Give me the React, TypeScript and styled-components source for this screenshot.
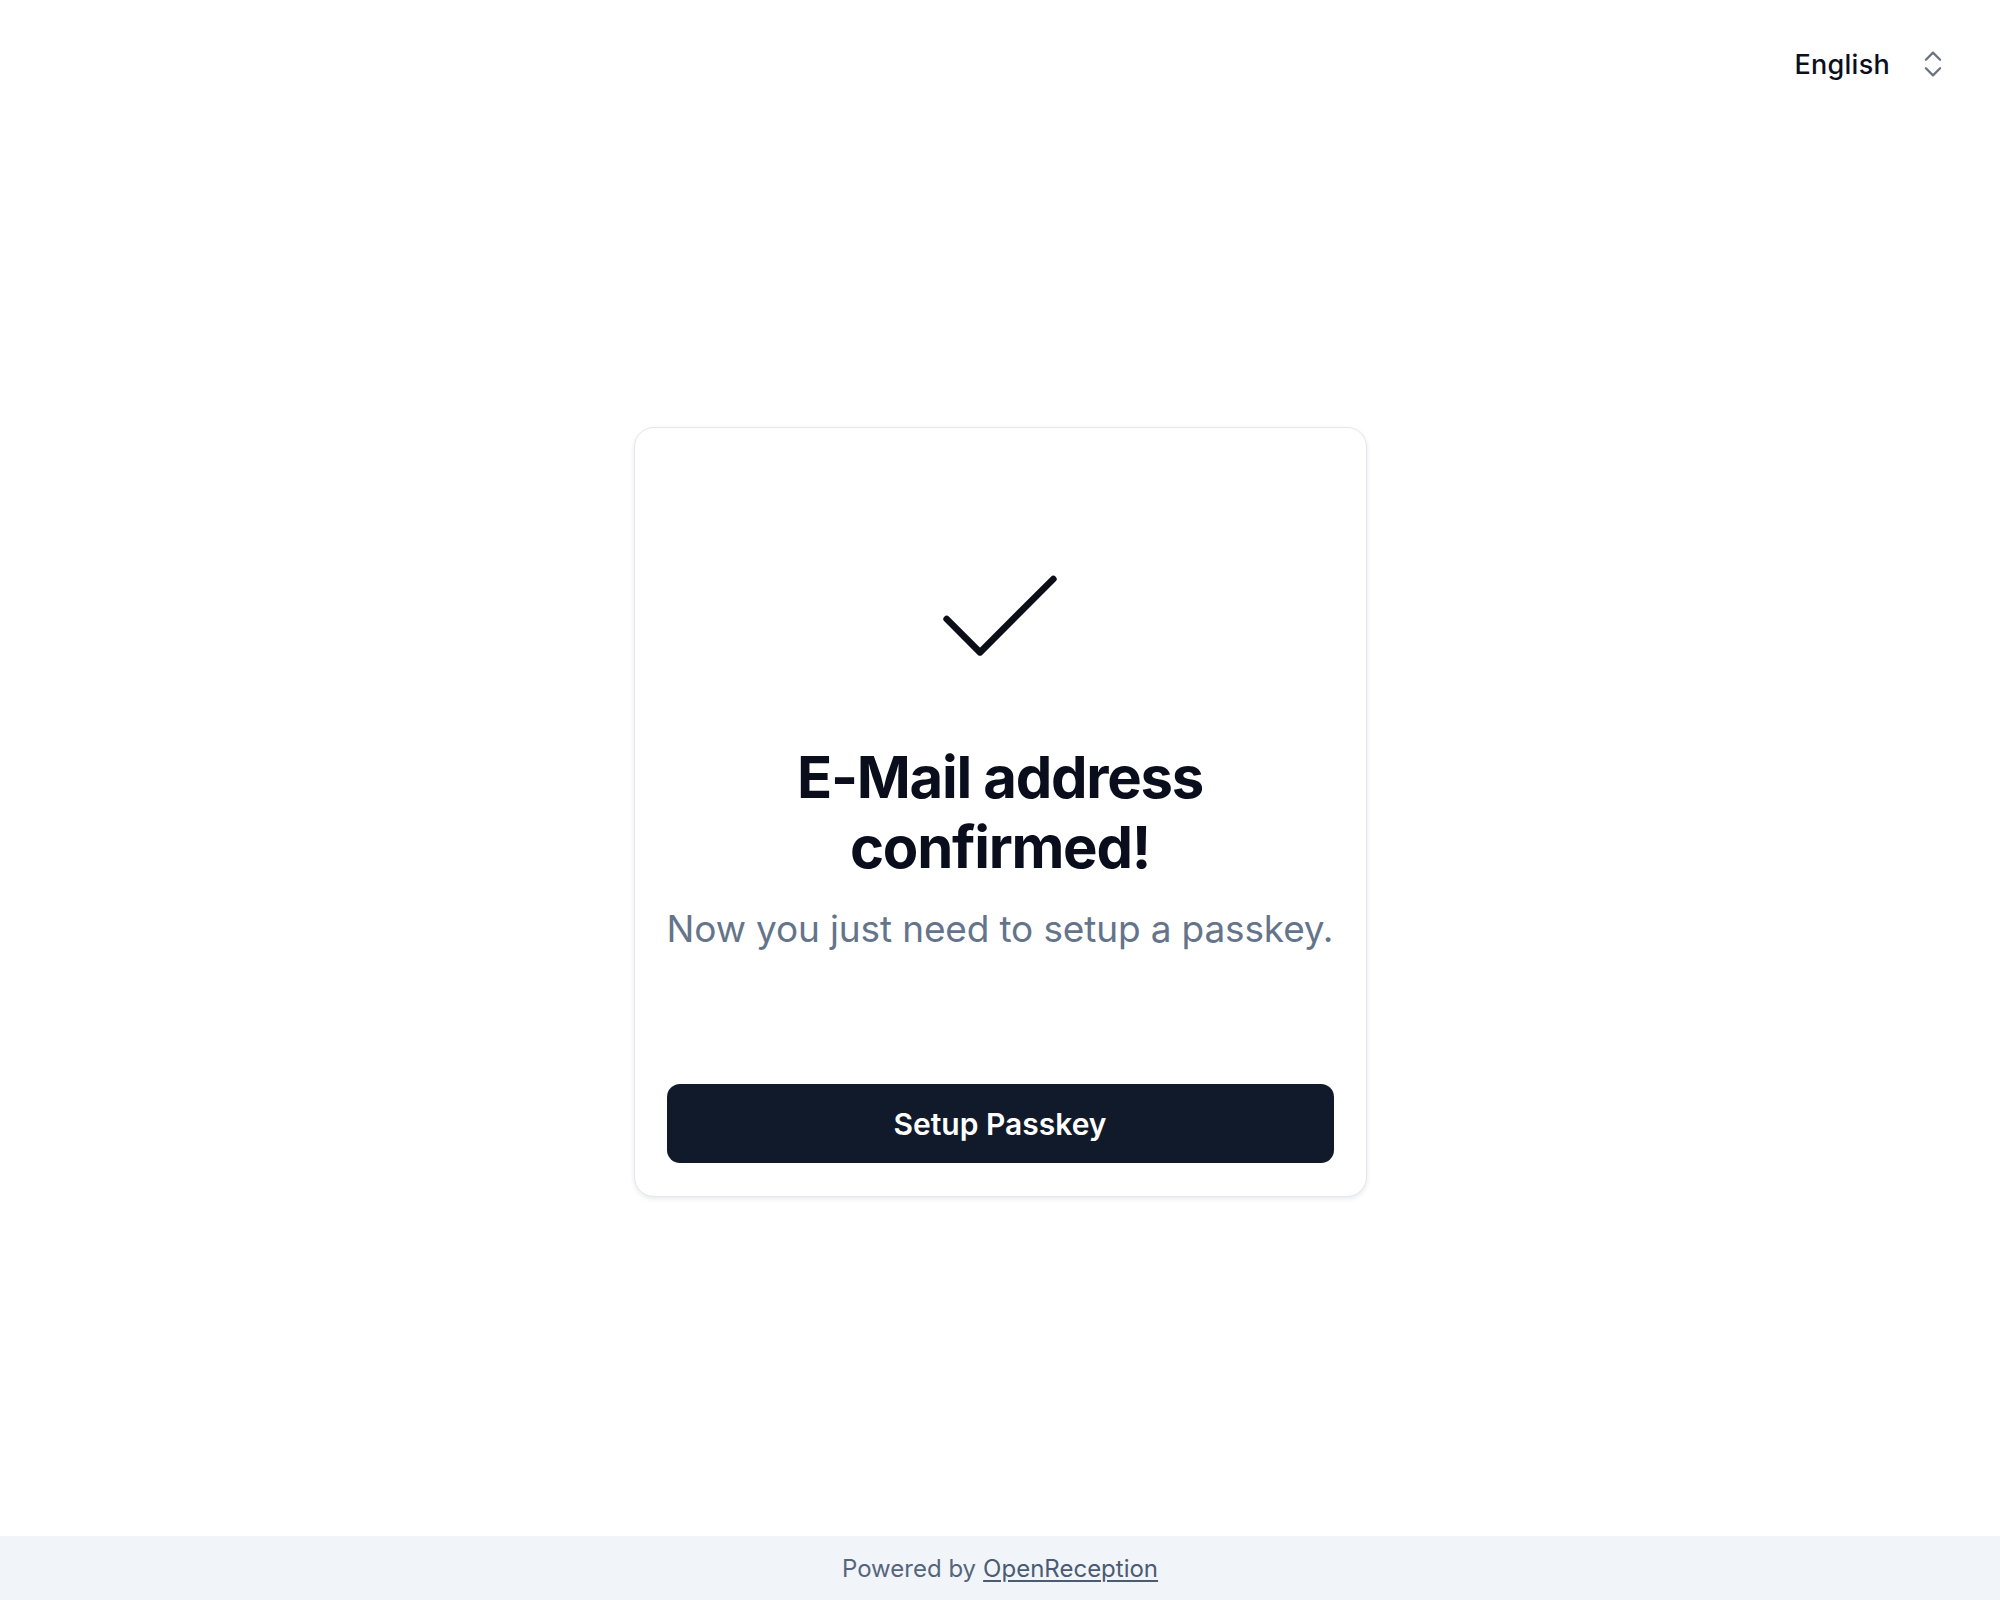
import React from "react";
import styled, { createGlobalStyle } from "styled-components";
import { Check, ChevronsUpDown } from "lucide-react";

const GlobalStyle = createGlobalStyle`
  * {
    box-sizing: border-box;
  }
  html,
  body {
    margin: 0;
    padding: 0;
    background: #ffffff;
    font-family: Inter, "Noto Sans", sans-serif;
  }
`;

const App = () => {
  return (
    <PageSC>
      <GlobalStyle />
      <HeaderSC>
        <LanguageButtonSC type="button">
          <span>English</span>
          <ChevronsUpDown size={34} strokeWidth={1.6} color="#6b7280" />
        </LanguageButtonSC>
      </HeaderSC>
      <MainSC>
        <CardSC>
          <IconWrapSC>
            <Check size={160} strokeWidth={1} color="#0b0d17" />
          </IconWrapSC>
          <TitleSC>E-Mail address confirmed!</TitleSC>
          <SubtitleSC>Now you just need to setup a passkey.</SubtitleSC>
          <PrimaryButtonSC type="button">Setup Passkey</PrimaryButtonSC>
        </CardSC>
      </MainSC>
      <FooterSC>
        Powered by <FooterLinkSC href="#">OpenReception</FooterLinkSC>
      </FooterSC>
    </PageSC>
  );
};

const PageSC = styled.div`
  min-height: 100vh;
  display: flex;
  flex-direction: column;
`;

const HeaderSC = styled.header`
  height: 128px;
  display: flex;
  justify-content: flex-end;
  align-items: center;
  padding-right: 50px;
`;

const LanguageButtonSC = styled.button`
  display: flex;
  align-items: center;
  gap: 26px;
  border: none;
  background: transparent;
  padding: 0;
  font-family: Inter, sans-serif;
  font-size: 27px;
  font-weight: 500;
  letter-spacing: 0.01em;
  color: #0b0f1e;
  cursor: pointer;
`;

const MainSC = styled.main`
  flex: 1;
  display: flex;
  justify-content: center;
  align-items: flex-start;
  padding-top: 299px;
`;

const CardSC = styled.section`
  width: 733px;
  display: flex;
  flex-direction: column;
  align-items: center;
  padding: 0 32px 33px;
  border: 1px solid #e3e6ee;
  border-radius: 20px;
  background: #ffffff;
  box-shadow: 0 2px 5px rgba(15, 23, 42, 0.09);
`;

const IconWrapSC = styled.div`
  margin-top: 111px;
  width: 160px;
  height: 160px;
  display: flex;
`;

const TitleSC = styled.h1`
  margin: 43px 0 0;
  font-size: 58px;
  line-height: 70px;
  font-weight: 700;
  letter-spacing: -0.022em;
  color: #0a0d1c;
  text-align: center;
  max-width: 560px;
`;

const SubtitleSC = styled.p`
  margin: 24px 0 0;
  font-size: 37px;
  line-height: 46px;
  font-weight: 400;
  letter-spacing: -0.004em;
  color: #64748b;
  text-align: center;
  white-space: nowrap;
`;

const PrimaryButtonSC = styled.button`
  margin-top: 132px;
  width: 100%;
  height: 79px;
  border: none;
  border-radius: 13px;
  background: #111a2b;
  color: #ffffff;
  font-family: Inter, sans-serif;
  font-size: 30px;
  font-weight: 600;
  cursor: pointer;
`;

const FooterSC = styled.footer`
  height: 64px;
  display: flex;
  align-items: center;
  justify-content: center;
  gap: 7px;
  background: #f1f5f9;
  font-size: 24px;
  color: #56657c;
`;

const FooterLinkSC = styled.a`
  color: #4b5b73;
  text-decoration: underline;
  text-underline-offset: 3px;
`;

export default React.memo(App);
